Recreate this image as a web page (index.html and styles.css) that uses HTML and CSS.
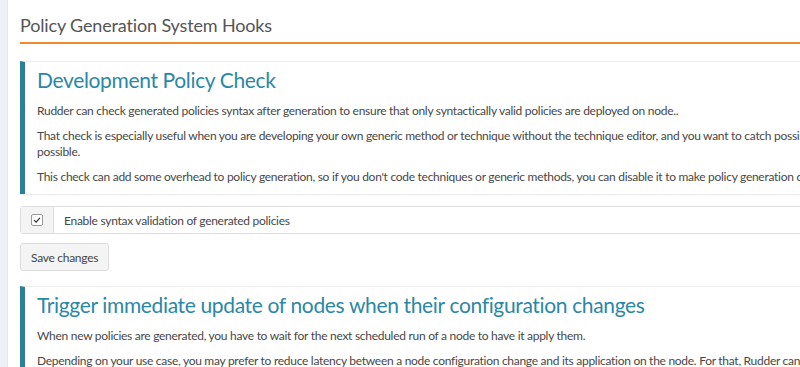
FILE: index.html
```html
<!DOCTYPE html>
<html lang="en">
<head>
    <meta charset="UTF-8">
    <title>Policy Generation System Hooks</title>
    <link rel="stylesheet" href="styles.css">
</head>
<body>
    <div class="sidebar"></div>
    <div class="main">
        <h2 class="page-title">Policy Generation System Hooks</h2>

        <div class="callout">
            <h3>Development Policy Check</h3>
            <p>Rudder can check generated policies syntax after generation to ensure that only syntactically valid policies are deployed on node..</p>
            <p>That check is especially useful when you are developing your own generic method or technique without the technique editor, and you want to catch possible errors as early as possible.</p>
            <p>This check can add some overhead to policy generation, so if you don't code techniques or generic methods, you can disable it to make policy generation quicker.</p>
        </div>

        <label class="input-group">
            <span class="addon">
                <span class="check">
                    <svg viewBox="0 0 12 12" width="10" height="10"><path d="M2.5 6.2 L5 8.6 L9.5 3.4" fill="none" stroke="#333" stroke-width="1.4"/></svg>
                </span>
            </span>
            <span class="field">Enable syntax validation of generated policies</span>
        </label>

        <button class="btn">Save changes</button>

        <div class="callout">
            <h3>Trigger immediate update of nodes when their configuration changes</h3>
            <p>When new policies are generated, you have to wait for the next scheduled run of a node to have it apply them.</p>
            <p>Depending on your use case, you may prefer to reduce latency between a node configuration change and its application on the node. For that, Rudder can send a notification to nodes.</p>
        </div>
    </div>
</body>
</html>
```

FILE: styles.css
```css
* {
    margin: 0;
    padding: 0;
    box-sizing: border-box;
}

body {
    font-family: Lato, "Open Sans", sans-serif;
    font-size: 12px;
    letter-spacing: -0.28px;
    color: #474747;
    background: #fff;
    display: flex;
    overflow: hidden;
    height: 367px;
}

.sidebar {
    width: 8px;
    flex-shrink: 0;
    background: #eef0f5;
    border-right: 1px solid #e4e7ed;
}

.main {
    width: 920px;
    flex-shrink: 0;
    padding: 14px 0 0 12px;
}

.page-title {
    font-size: 18px;
    font-weight: 400;
    letter-spacing: -0.15px;
    color: #555;
    line-height: 22px;
    padding-bottom: 6px;
    border-bottom: 2px solid #f08a2e;
    margin-bottom: 17px;
}

.callout {
    border-top: 1px solid #ececec;
    border-left: 5px solid #2a7f9c;
    box-shadow: 0 1px 1px rgba(0, 0, 0, 0.08);
    padding: 4px 0 1px 12px;
    margin-bottom: 12px;
}

.callout h3 {
    font-size: 21px;
    font-weight: 400;
    letter-spacing: -0.35px;
    color: #2a88a6;
    line-height: 28px;
    margin-bottom: 9px;
}

.callout p {
    line-height: 16.5px;
    margin-bottom: 8px;
}

.input-group {
    display: flex;
    height: 28px;
    border: 1px solid #ddd;
    border-radius: 3px;
    margin-bottom: 9px;
}

.addon {
    width: 33px;
    background: #f4f4f4;
    border-right: 1px solid #ddd;
    display: flex;
    align-items: center;
    justify-content: center;
}

.check {
    width: 12px;
    height: 12px;
    border: 1px solid #9a9a9a;
    border-radius: 2px;
    background: #fff;
    display: flex;
    align-items: center;
    justify-content: center;
}

.field {
    display: flex;
    align-items: center;
    padding-left: 10px;
}

.btn {
    font-family: inherit;
    font-size: 12px;
    letter-spacing: -0.28px;
    color: #444;
    background: #f4f4f4;
    border: 1px solid #ddd;
    border-radius: 3px;
    height: 28px;
    padding: 0 10px;
    margin-bottom: 15px;
}
```
